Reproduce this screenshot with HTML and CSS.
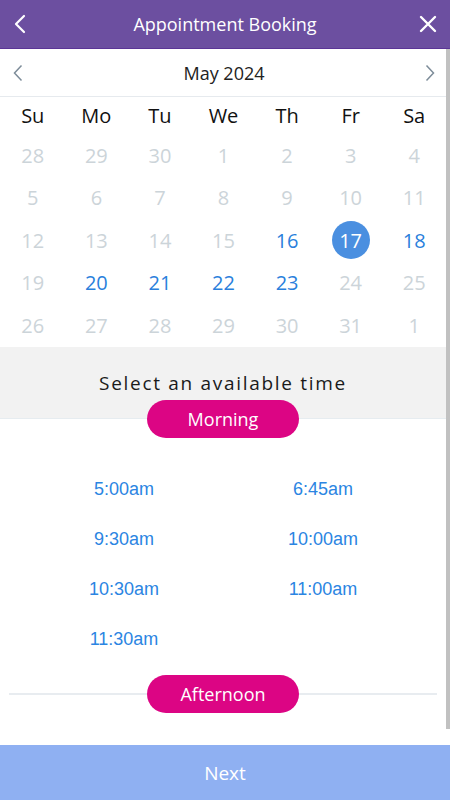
FILE: index.html
```html
<!DOCTYPE html>
<html lang="en">
<head>
<meta charset="utf-8">
<title>Appointment Booking</title>
<link rel="stylesheet" href="styles.css">
</head>
<body>
<div class="app">
  <header class="topbar">
    <button class="icon-btn" aria-label="Back">
      <svg width="12" height="20" viewBox="0 0 12 20"><path d="M10 2 L2 10 L10 18" fill="none" stroke="#fff" stroke-width="2.2" stroke-linecap="round" stroke-linejoin="round"/></svg>
    </button>
    <h1 class="title">Appointment Booking</h1>
    <button class="icon-btn" aria-label="Close">
      <svg width="18" height="18" viewBox="0 0 18 18"><path d="M2 2 L16 16 M16 2 L2 16" fill="none" stroke="#fff" stroke-width="2.4" stroke-linecap="round"/></svg>
    </button>
  </header>

  <div class="body-area">
    <main class="content">
      <div class="month-bar">
        <svg class="chev" width="10" height="18" viewBox="0 0 10 18"><path d="M8.5 1.5 L1.5 9 L8.5 16.5" fill="none" stroke="#7d8c99" stroke-width="1.5"/></svg>
        <span class="month">May 2024</span>
        <svg class="chev" width="10" height="18" viewBox="0 0 10 18"><path d="M1.5 1.5 L8.5 9 L1.5 16.5" fill="none" stroke="#7d8c99" stroke-width="1.5"/></svg>
      </div>

      <div class="weekdays">
        <span>Su</span><span>Mo</span><span>Tu</span><span>We</span><span>Th</span><span>Fr</span><span>Sa</span>
      </div>

      <div class="days">
        <span>28</span><span>29</span><span>30</span><span>1</span><span>2</span><span>3</span><span>4</span>
        <span>5</span><span>6</span><span>7</span><span>8</span><span>9</span><span>10</span><span>11</span>
        <span>12</span><span>13</span><span>14</span><span>15</span><span class="avail">16</span><span class="selected"><b>17</b></span><span class="avail">18</span>
        <span>19</span><span class="avail">20</span><span class="avail">21</span><span class="avail">22</span><span class="avail">23</span><span>24</span><span>25</span>
        <span>26</span><span>27</span><span>28</span><span>29</span><span>30</span><span>31</span><span>1</span>
      </div>

      <section class="select-box">
        <p class="select-label">Select an available time</p>
      </section>

      <div class="pill-row">
        <span class="pill">Morning</span>
      </div>

      <div class="times">
        <span>5:00am</span><span>6:45am</span>
        <span>9:30am</span><span>10:00am</span>
        <span>10:30am</span><span>11:00am</span>
        <span>11:30am</span><span></span>
      </div>

      <div class="pill-row divider">
        <span class="pill">Afternoon</span>
      </div>
    </main>
    <div class="scrollbar"><div class="thumb"></div></div>
  </div>

  <footer class="footer">
    <button class="next">Next</button>
  </footer>
</div>
</body>
</html>
```

FILE: styles.css
```css
* { box-sizing: border-box; }
html, body { margin: 0; padding: 0; }
body {
  width: 450px;
  height: 800px;
  overflow: hidden;
  font-family: "Open Sans", "Noto Sans", sans-serif;
  background: #fff;
}
.app {
  height: 800px;
  display: flex;
  flex-direction: column;
}
.topbar {
  height: 49px;
  flex: none;
  background: #6c4fa0;
  border-bottom: 1px solid #5b3596;
  display: flex;
  align-items: center;
  justify-content: space-between;
  padding: 0 10px 0 8px;
}
.icon-btn {
  background: none;
  border: 0;
  padding: 0;
  width: 24px;
  height: 24px;
  display: flex;
  align-items: center;
  justify-content: center;
}
.title {
  margin: 0;
  font-size: 18px;
  font-weight: 400;
  color: #fff;
  padding-left: 2px;
}
.body-area {
  flex: 1;
  display: flex;
  overflow: hidden;
}
.content {
  width: 446px;
  flex: none;
  overflow: hidden;
}
.scrollbar {
  width: 4px;
  flex: none;
  background: #fff;
}
.thumb {
  height: 680px;
  background: #c1c1c1;
}
.month-bar {
  height: 48px;
  border-bottom: 1px solid #e6eaee;
  display: flex;
  align-items: center;
  justify-content: space-between;
  padding: 0 11px 0 13px;
}
.month {
  font-size: 18px;
  color: #222;
  padding-top: 1px;
}
.weekdays, .days {
  display: grid;
  grid-template-columns: repeat(7, 1fr);
  padding: 0 0 0 1px;
  text-align: center;
}
.weekdays {
  height: 37px;
  align-items: center;
  font-size: 20px;
  color: #111;
}
.days {
  grid-auto-rows: 42.5px;
  align-items: center;
  justify-items: center;
  font-size: 20px;
  color: #ccd4d9;
}
.days .avail { color: #2a7fdc; }
.days .selected {
  width: 38px;
  height: 38px;
  border-radius: 50%;
  background: #4a8fe0;
  color: #fff;
  display: flex;
  align-items: center;
  justify-content: center;
}
.days .selected b { font-weight: 400; }
.select-box {
  height: 72px;
  background: #f2f2f2;
  border-bottom: 1px solid #e6ecf0;
  display: flex;
  align-items: center;
  justify-content: center;
}
.select-label {
  margin: 0;
  font-size: 19px;
  letter-spacing: 1.7px;
  color: #1a1a1a;
  padding-top: 1px;
}
.pill-row {
  display: flex;
  justify-content: center;
  margin-top: -19px;
  position: relative;
}
.pill {
  width: 152px;
  height: 38px;
  border-radius: 19px;
  background: #dc0584;
  color: #fff;
  font-size: 18px;
  display: flex;
  align-items: center;
  justify-content: center;
}
.times {
  display: grid;
  grid-template-columns: 199px 199px;
  justify-content: center;
  grid-auto-rows: 50px;
  align-items: center;
  justify-items: center;
  padding: 27px 0 10px 1px;
  font-family: "Liberation Sans", Arial, sans-serif;
  font-size: 18px;
  color: #2b85e2;
}
.divider {
  margin: 0 9px 0 9px;
  background: linear-gradient(#e8ecf0, #e8ecf0) center / 100% 2px no-repeat;
}
.footer {
  height: 55px;
  flex: none;
  background: #8fb0f2;
}
.next {
  width: 100%;
  height: 100%;
  border: 0;
  background: none;
  color: #fff;
  font-family: "Open Sans", "Noto Sans", sans-serif;
  font-size: 19px;
  padding: 0;
}
```
